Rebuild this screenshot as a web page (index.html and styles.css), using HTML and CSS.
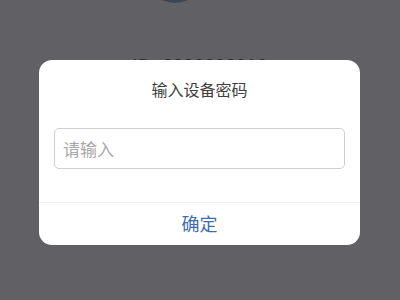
FILE: index.html
```html
<!DOCTYPE html>
<html lang="zh-CN">
<head>
<meta charset="utf-8">
<link rel="stylesheet" href="styles.css">
</head>
<body>
<div class="page">
  <div class="avatar"></div>
  <div class="device-id">ID: 8888888816</div>
</div>
<div class="overlay">
  <div class="dialog">
    <div class="dialog-title">输入设备密码</div>
    <div class="dialog-body">
      <input class="pwd-input" type="password" placeholder="请输入">
    </div>
    <div class="dialog-actions">
      <button class="btn-ok">确定</button>
    </div>
  </div>
</div>
</body>
</html>
```
FILE: styles.css
```css
* { box-sizing: border-box; }
html, body {
  margin: 0;
  padding: 0;
  width: 400px;
  height: 300px;
  overflow: hidden;
  background: #616065;
  font-family: "Noto Sans CJK SC", "Noto Sans", sans-serif;
}
.page {
  display: flex;
  flex-direction: column;
  align-items: center;
}
.avatar {
  width: 56px;
  height: 56px;
  border-radius: 50%;
  background: #3d4350;
  margin-top: -53px;
  margin-left: -50px;
}
.device-id {
  margin-top: 53px;
  font-family: "Liberation Sans", sans-serif;
  font-size: 17px;
  letter-spacing: 1px;
  color: #2c2c30;
  line-height: 20px;
}
.overlay {
  position: absolute;
  left: 0;
  top: 0;
  width: 400px;
  height: 300px;
  display: flex;
  justify-content: flex-start;
  padding: 60px 0 0 39px;
}
.dialog {
  width: 321px;
  height: 185px;
  background: #fff;
  border-radius: 13px;
  display: flex;
  flex-direction: column;
  overflow: hidden;
}
.dialog-title {
  margin-top: 18px;
  height: 22px;
  line-height: 22px;
  text-align: center;
  font-size: 16px;
  color: #404040;
}
.dialog-body {
  padding: 28px 15px 0 15px;
  height: 102px;
}
.pwd-input {
  display: block;
  width: 291px;
  height: 41px;
  border: 1px solid #cfcfcf;
  border-radius: 5px;
  padding: 0 8px;
  font-family: "Noto Sans CJK SC", sans-serif;
  font-size: 17px;
  outline: none;
  background: #fff;
}
.pwd-input::placeholder {
  color: #a8a8a8;
}
.dialog-actions {
  border-top: 1px solid #efefef;
  flex: 1;
  display: flex;
}
.btn-ok {
  flex: 1;
  border: 0;
  background: transparent;
  font-family: "Noto Sans CJK SC", sans-serif;
  font-size: 18px;
  color: #3f6db3;
  padding: 0;
  padding-bottom: 2px;
}
```
